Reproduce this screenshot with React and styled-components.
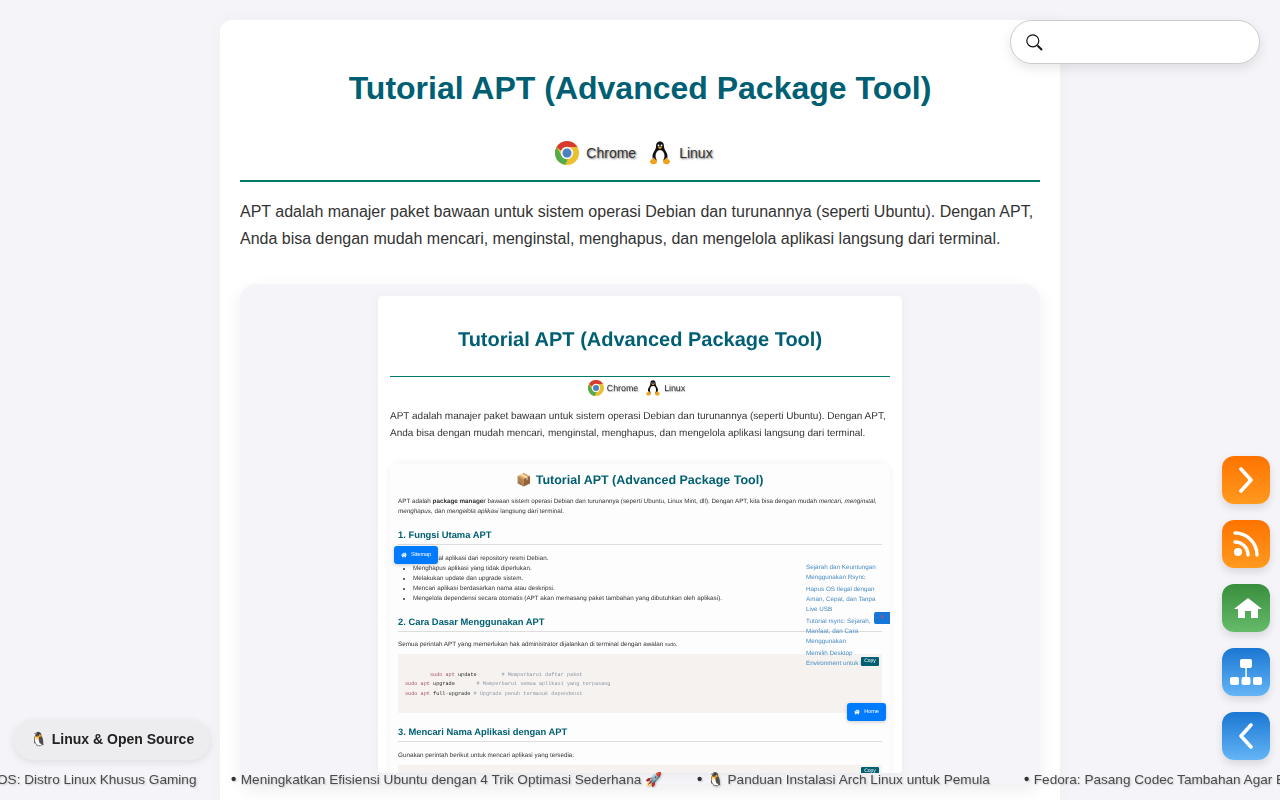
import React from 'react'
import styled, { createGlobalStyle } from 'styled-components'
import { FaHome } from 'react-icons/fa'

const GlobalStyle = createGlobalStyle`
  html, body {
    margin: 0;
    height: 800px;
    overflow: hidden;
    background: #f4f4f9;
    font-family: "Liberation Sans", Arial, sans-serif;
  }
`

const Page = styled.div`
  width: 840px;
  margin: 20px auto 0;
  height: 780px;
  overflow: hidden;
  background: #fff;
  border-radius: 12px 12px 0 0;
  box-shadow: 0 0 20px rgba(0, 0, 0, 0.03);
  padding: 0 20px;
  box-sizing: border-box;
`

const Title = styled.h1`
  margin: 0;
  padding-top: 48px;
  font-size: 32px;
  line-height: 40px;
  font-weight: 700;
  text-align: center;
  color: #005f73;
`

const Labels = styled.div`
  display: flex;
  justify-content: center;
  align-items: center;
  height: 36px;
  margin-top: 27px;
  padding-bottom: 9px;
  border-bottom: 2px solid #00796b;
`

const Label = styled.span`
  display: inline-flex;
  align-items: center;
  gap: 7px;
  margin-right: 12px;
  font-size: 14px;
  color: #333;
  text-shadow: 1px 1px 2px rgba(0, 0, 0, 0.55);
`

const Intro = styled.p`
  margin: 16px 0 0;
  font-size: 16px;
  line-height: 27px;
  color: #333;
`

const Panel = styled.div`
  margin-top: 32px;
  height: 500px;
  background: #f4f4f9;
  border-radius: 16px;
  box-shadow: 0 6px 18px rgba(0, 0, 0, 0.07);
  display: flex;
  justify-content: center;
  padding-top: 12px;
  box-sizing: border-box;
`

const Shot = styled.div`
  position: relative;
  width: 524px;
  height: 477px;
  background: #fff;
  border-radius: 4px;
  padding: 0 12px;
  box-sizing: border-box;
  overflow: hidden;
  box-shadow: 0 2px 10px rgba(0, 0, 0, 0.05);
  text-rendering: geometricPrecision;
  filter: blur(0.3px);
`

const ShotTitle = styled.div`
  padding-top: 32px;
  font-size: 20px;
  line-height: 24px;
  font-weight: 700;
  text-align: center;
  color: #005f73;
`

const ShotRule = styled.div`
  margin-top: 24px;
  border-top: 1px solid #00796b;
`

const ShotLabels = styled.div`
  display: flex;
  justify-content: center;
  align-items: center;
  height: 22px;
`

const ShotLabel = styled.span`
  display: inline-flex;
  align-items: center;
  gap: 3px;
  margin-right: 7px;
  font-size: 8.8px;
  color: #333;
  text-shadow: 0.5px 0.5px 1px rgba(0, 0, 0, 0.4);
`

const ShotIntro = styled.p`
  margin: 9px 0 0;
  font-size: 10px;
  line-height: 17px;
  color: #333;
`

const Article = styled.div`
  margin-top: 22px;
  padding: 8px 8px 0;
  background: #fdfdfd;
  border-radius: 8px;
  box-shadow: 0 0 8px rgba(0, 0, 0, 0.06);
  height: 340px;
`

const ArticleTitle = styled.div`
  font-size: 12.5px;
  line-height: 17px;
  font-weight: 700;
  text-align: center;
  color: #005f73;
`

const Small = styled.p`
  margin: ${(p) => p.$top || '8px'} 0 0;
  font-size: 6.3px;
  line-height: 10px;
  color: #333;
`

const InlineCode = styled.span`
  font-size: 5px;
`

const Heading = styled.div`
  margin-top: ${(p) => p.$top || '11px'};
  padding-bottom: 3px;
  border-bottom: 1px solid #ddd;
  font-size: 9.4px;
  line-height: 13px;
  font-weight: 700;
  color: #005f73;
`

const Bullets = styled.ul`
  margin: 9px 0 0;
  padding: 0 0 0 15px;
  font-size: 6.3px;
  line-height: 10px;
  color: #333;
`

const Code = styled.pre`
  margin: 4px 0 0;
  height: 59px;
  padding: 17px 7px 0;
  box-sizing: border-box;
  background: #f5f2f0;
  font-family: "Liberation Mono", monospace;
  font-size: 5.2px;
  line-height: 9.3px;
  color: #8a96a3;
  overflow: hidden;
`

const Cmd = styled.span`
  color: #a8506e;
`

const Arg = styled.span`
  color: #222;
`

const MiniButton = styled.div`
  position: absolute;
  left: ${(p) => p.$left}px;
  top: ${(p) => p.$top}px;
  display: flex;
  align-items: center;
  justify-content: center;
  gap: 4px;
  width: ${(p) => p.$w}px;
  height: 18px;
  background: #007bff;
  border-radius: 3px;
  color: #fff;
  font-size: 5.5px;
  box-shadow: 0 1px 4px rgba(0, 0, 0, 0.2);
`

const MiniClose = styled.div`
  position: absolute;
  left: 496px;
  top: 316px;
  width: 16px;
  height: 12px;
  background: #1677d8;
  border-radius: 2px 0 0 2px;
  color: #d84a5a;
  font-size: 6px;
  line-height: 12px;
  text-align: center;
`

const MiniCopy = styled.div`
  position: absolute;
  left: 483px;
  top: ${(p) => p.$top}px;
  width: 18px;
  height: 9px;
  background: #005f73;
  border-radius: 1px;
  color: #fff;
  font-size: 5px;
  line-height: 9px;
  text-align: center;
`

const MiniToc = styled.div`
  position: absolute;
  left: 428px;
  top: 267px;
  width: 72px;
  font-size: 6.3px;
  line-height: 10px;
  color: #4a8cc4;
`

const TocItem = styled.div`
  margin-bottom: 2px;
`

const SearchBox = styled.div`
  position: fixed;
  top: 20px;
  left: 1010px;
  width: 250px;
  height: 44px;
  box-sizing: border-box;
  background: #fff;
  border: 1px solid #ccc;
  border-radius: 22px;
  box-shadow: 0 4px 12px rgba(0, 0, 0, 0.1);
  display: flex;
  align-items: center;
  padding-left: 15px;
`

const Dock = styled.div`
  position: fixed;
  left: 1222px;
  top: 456px;
  display: flex;
  flex-direction: column;
  gap: 16px;
`

const DockButton = styled.div`
  width: 48px;
  height: 48px;
  border-radius: 12px;
  display: flex;
  align-items: center;
  justify-content: center;
  background: ${(p) => p.$bg};
  box-shadow: 0 4px 8px rgba(0, 0, 0, 0.12);
`

const Badge = styled.div`
  position: fixed;
  left: 14px;
  top: 720px;
  width: 196px;
  height: 40px;
  padding-bottom: 2px;
  box-sizing: border-box;
  border-radius: 20px;
  background: #ededf0;
  box-shadow: 0 2px 8px rgba(0, 0, 0, 0.1);
  display: flex;
  align-items: center;
  justify-content: center;
  gap: 5px;
  font-size: 14px;
  font-weight: 700;
  color: #222;
`

const Ticker = styled.div`
  position: fixed;
  left: 0;
  right: 0;
  bottom: 0;
  height: 40px;
  overflow: hidden;
  white-space: nowrap;
  font-size: 13.6px;
  line-height: 40px;
  color: #4a4a4a;
  text-shadow: 1px 1px 2px rgba(0, 0, 0, 0.2);
`

const TickerItem = styled.span`
  position: absolute;
  left: ${(p) => p.$left}px;
  top: 0;
`

const Dot = styled.span`
  margin-right: 4.5px;
  font-size: 15px;
  line-height: 0;
  font-weight: 700;
  color: #333;
`

const ChromeIcon = ({ size }) => (
  <svg width={size} height={size} viewBox="0 0 48 48">
    <circle cx="24" cy="24" r="24" fill="#eac02f" />
    <path d="M24 0a24 24 0 0 1 20.8 12H24a12 12 0 0 0-11.4 8.2L3.2 12A24 24 0 0 1 24 0z" fill="#d93a30" />
    <path d="M3.2 12l10.4 18.5A12 12 0 0 0 26 36l-5.8 11.7A24 24 0 0 1 3.2 12z" fill="#55aa4c" />
    <circle cx="24" cy="24" r="12.5" fill="#f4f4f4" />
    <circle cx="24" cy="24" r="9" fill="#4a80c4" />
  </svg>
)

const TuxIcon = ({ size }) => (
  <svg width={size} height={size} viewBox="0 0 48 48">
    <path d="M24 1c6 0 8 5 8 10 0 5 3 8 6 14 2 5 1 11-2 14H12c-3-3-4-9-2-14 3-6 6-9 6-14 0-5 2-10 8-10z" fill="#111" />
    <ellipse cx="24" cy="30" rx="9" ry="12" fill="#fff" />
    <circle cx="21" cy="9" r="1.8" fill="#fff" />
    <circle cx="27" cy="9" r="1.8" fill="#fff" />
    <path d="M19.5 13l4.5-2 4.5 2-4.5 3z" fill="#eda41c" />
    <path d="M3 41l8-8 7 7-1 5-9 2z" fill="#eda41c" />
    <path d="M45 41l-8-8-7 7 1 5 9 2z" fill="#eda41c" />
  </svg>
)

const SearchIcon = () => (
  <svg width="17" height="17" viewBox="0 0 17 17" fill="none" stroke="#111">
    <circle cx="6.8" cy="6.8" r="6" strokeWidth="1.2" />
    <path d="M11.5 11.5l4.5 4.5" strokeWidth="2" />
  </svg>
)

const ChevronIcon = ({ left }) => (
  <svg width="16" height="26" viewBox="0 0 16 26" fill="none" stroke="#fff" strokeWidth="3.6" strokeLinecap="round" strokeLinejoin="round">
    <path d={left ? 'M13 2L3 13l10 11' : 'M3 2l10 11L3 24'} />
  </svg>
)

const RssIcon = () => (
  <svg width="26" height="26" viewBox="0 0 26 26" fill="none" stroke="#fff" strokeWidth="3.4" strokeLinecap="round">
    <circle cx="5" cy="21" r="4" fill="#fff" stroke="none" />
    <path d="M2 11a13 13 0 0 1 13 13" />
    <path d="M2 2a22 22 0 0 1 22 22" />
  </svg>
)

const HomeIcon = () => (
  <svg width="32" height="20" viewBox="-4 0 32 20" fill="#fff">
    <path d="M14 0l14 11h-4v9h-7v-7h-6v7H4v-9H0z" />
  </svg>
)

const SitemapIcon = () => (
  <svg width="32" height="26" viewBox="0 0 32 26" fill="#fff">
    <rect x="10" y="0" width="12" height="9" rx="2" />
    <rect x="15.3" y="8" width="1.5" height="10" />
    <rect x="0" y="18" width="9" height="8" rx="2" />
    <rect x="11.5" y="18" width="9" height="8" rx="2" />
    <rect x="23" y="18" width="9" height="8" rx="2" />
  </svg>
)

const App = () => (
  <>
    <GlobalStyle />
    <Page>
      <Title>Tutorial APT (Advanced Package Tool)</Title>
      <Labels>
        <Label><ChromeIcon size={24} /> Chrome</Label>
        <Label><TuxIcon size={24} /> Linux</Label>
      </Labels>
      <Intro>
        APT adalah manajer paket bawaan untuk sistem operasi Debian dan turunannya (seperti Ubuntu). Dengan APT,
        Anda bisa dengan mudah mencari, menginstal, menghapus, dan mengelola aplikasi langsung dari terminal.
      </Intro>
      <Panel>
        <Shot>
          <ShotTitle>Tutorial APT (Advanced Package Tool)</ShotTitle>
          <ShotRule />
          <ShotLabels>
            <ShotLabel><ChromeIcon size={16} /> Chrome</ShotLabel>
            <ShotLabel><TuxIcon size={16} /> Linux</ShotLabel>
          </ShotLabels>
          <ShotIntro>
            APT adalah manajer paket bawaan untuk sistem operasi Debian dan turunannya (seperti Ubuntu). Dengan APT,
            Anda bisa dengan mudah mencari, menginstal, menghapus, dan mengelola aplikasi langsung dari terminal.
          </ShotIntro>
          <Article>
            <ArticleTitle>📦 Tutorial APT (Advanced Package Tool)</ArticleTitle>
            <Small>
              APT adalah <b>package manager</b> bawaan sistem operasi Debian dan turunannya (seperti Ubuntu, Linux Mint, dll). Dengan APT, kita bisa dengan mudah <i>mencari, menginstal, menghapus,</i> dan <i>mengelola aplikasi</i> langsung dari terminal.
            </Small>
            <Heading>1. Fungsi Utama APT</Heading>
            <Bullets>
              <li>Menginstal aplikasi dari repository resmi Debian.</li>
              <li>Menghapus aplikasi yang tidak diperlukan.</li>
              <li>Melakukan update dan upgrade sistem.</li>
              <li>Mencari aplikasi berdasarkan nama atau deskripsi.</li>
              <li>Mengelola dependensi secara otomatis (APT akan memasang paket tambahan yang dibutuhkan oleh aplikasi).</li>
            </Bullets>
            <Heading>2. Cara Dasar Menggunakan APT</Heading>
            <Small $top="8px">Semua perintah APT yang memerlukan hak administrator dijalankan di terminal dengan awalan <InlineCode>sudo</InlineCode>.</Small>
            <Code>
              {'        '}<Cmd>sudo apt</Cmd> <Arg>update</Arg>{'        # Memperbarui daftar paket\n'}
              <Cmd>sudo apt</Cmd> <Arg>upgrade</Arg>{'       # Memperbarui semua aplikasi yang terpasang\n'}
              <Cmd>sudo apt</Cmd> <Arg>full-upgrade</Arg>{' # Upgrade penuh termasuk dependensi'}
            </Code>
            <Heading $top="12px">3. Mencari Nama Aplikasi dengan APT</Heading>
            <Small $top="9px">Gunakan perintah berikut untuk mencari aplikasi yang tersedia:</Small>
            <Code />
          </Article>
          <MiniButton $left={16} $top={250} $w={44}><FaHome size={6} /> Sitemap</MiniButton>
          <MiniToc>
            <TocItem>Sejarah dan Keuntungan Menggunakan Rsync</TocItem>
            <TocItem>Hapus OS Ilegal dengan Aman, Cepat, dan Tanpa Live USB</TocItem>
            <TocItem>Tutorial rsync: Sejarah, Manfaat, dan Cara Menggunakan</TocItem>
            <TocItem>Memilih Desktop Environment untuk Linux</TocItem>
          </MiniToc>
          <MiniClose>✕</MiniClose>
          <MiniCopy $top={361}>Copy</MiniCopy>
          <MiniButton $left={469} $top={407} $w={39}><FaHome size={6} /> Home</MiniButton>
          <MiniCopy $top={471}>Copy</MiniCopy>
        </Shot>
      </Panel>
    </Page>
    <SearchBox><SearchIcon /></SearchBox>
    <Dock>
      <DockButton $bg="linear-gradient(#ff7300, #ff9a1f)"><ChevronIcon /></DockButton>
      <DockButton $bg="linear-gradient(#ff7300, #ff9a1f)"><RssIcon /></DockButton>
      <DockButton $bg="linear-gradient(#388e3c, #66bb6a)"><HomeIcon /></DockButton>
      <DockButton $bg="linear-gradient(#1976d2, #64b5f6)"><SitemapIcon /></DockButton>
      <DockButton $bg="linear-gradient(#1976d2, #64b5f6)"><ChevronIcon left /></DockButton>
    </Dock>
    <Badge><span>🐧</span> Linux &amp; Open Source</Badge>
    <Ticker>
      <TickerItem $left={-3}>OS: Distro Linux Khusus Gaming</TickerItem>
      <TickerItem $left={231}><Dot>•</Dot>Meningkatkan Efisiensi Ubuntu dengan 4 Trik Optimasi Sederhana 🚀</TickerItem>
      <TickerItem $left={697}><Dot>•</Dot>🐧 Panduan Instalasi Arch Linux untuk Pemula</TickerItem>
      <TickerItem $left={1024}><Dot>•</Dot>Fedora: Pasang Codec Tambahan Agar Bisa</TickerItem>
    </Ticker>
  </>
)

export default App
